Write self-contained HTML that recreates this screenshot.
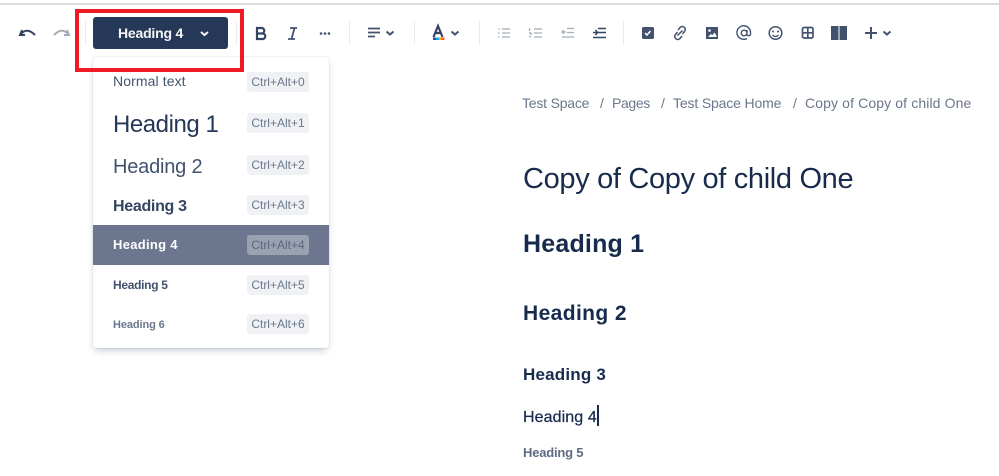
<!DOCTYPE html>
<html><head><meta charset="utf-8"><style>
html,body{margin:0;padding:0;background:#fff}
body{width:999px;height:476px;position:relative;overflow:hidden;font-family:"Liberation Sans",sans-serif}
.t{position:absolute;white-space:nowrap;line-height:1}
.sep{position:absolute;top:21px;width:1px;height:24px;background:#ebecf0}
.k{position:absolute;left:247px;width:62px;height:20px;background:#f0f1f4;border-radius:3px;color:#6b778c;font-size:12px;line-height:20px;text-align:center}
.b{font-size:14px;color:#6b778c;top:96px}
svg{position:absolute;overflow:visible}
</style></head><body>
<div style="position:absolute;left:0;top:3px;width:999px;height:2px;background:#dcdcdc"></div>

<svg style="left:0;top:0" width="999" height="60" fill="none" stroke="#42526e" stroke-width="2">
<path d="M22 30l-2 5 5 0M21 34c4-5 9-4 14 1" stroke="#344563"/>
<path d="M67 30l2 5-5 0M68 34c-4-5-9-4-14 1" stroke="#a5adba"/>
<path d="M257 28h5a2.800 2.800 0 0 1 0 5.500h-5zM257 33.500h6a2.800 2.800 0 0 1 0 5.500h-6z" stroke-width="2.200" stroke="#344563"/>
<path d="M290 28h7M295 39h-7M294.500 28l-3 11" stroke-width="1.800"/>
<circle cx="321" cy="33.500" r="1.300" fill="#42526e" stroke="none"/><circle cx="325" cy="33.500" r="1.300" fill="#42526e" stroke="none"/><circle cx="329" cy="33.500" r="1.300" fill="#42526e" stroke="none"/>
<path d="M368 29h12M368 33h12M368 37h7" stroke-width="1.800" transform="translate(0,-.5)"/>
<path d="M386.500 31.500l3.500 3 3.500-3"/><path d="M451.500 31.500l3.500 3 3.500-3"/>
<path d="M433.500 37l4.500-11 4.500 11M435 33h6" stroke="#344563" stroke-width="2.200"/>
<rect x="433" y="37.500" width="3" height="2.500" fill="#5243aa" stroke="none"/><rect x="436" y="37.500" width="3" height="2.500" fill="#00b8d9" stroke="none"/><rect x="439" y="37.500" width="2.500" height="2.500" fill="#ffab00" stroke="none"/><rect x="441.500" y="37.500" width="3" height="2.500" fill="#ff5630" stroke="none"/>
<g stroke="#a5adba" stroke-width="1.300">
<path d="M502 29h8M502 33h8M502 37h8M498 29h1.500M498 33h1.500M498 37h1.500"/>
<path d="M534 29h8M534 33h8M534 37h8M529.500 28v3M529 33h2v2M529 36.500h2"/>
<path d="M567 28.500h7M567 32.500h7M562 37h12M566 32h-4M564 30l-2 2 2 2"/>
</g>
<path d="M598 28.500h8M598 32.500h8M593 37.500h13M593 32.500h4M595.500 30l2 2.500-2 2.500" stroke="#344563" stroke-width="1.500"/>
<rect x="642" y="27" width="12" height="12" rx="1.500" fill="#42526e" stroke="none"/><path d="M645 33l2 2 3.500-4" stroke="#fff" stroke-width="1.500"/>
<path d="M678 30l2-2.500a3 3 0 0 1 4.500 4l-2 2.500M682 36l-2 2.500a3 3 0 0 1-4.500-4l2-2.500M677.500 35.500l5-5" stroke-width="1.500"/>
<rect x="706" y="27" width="12" height="12" fill="#42526e" stroke="none"/><circle cx="709.500" cy="30.500" r="1.300" fill="#fff" stroke="none"/><path d="M708 37l3-3 1.500 1 2-2.500 2 3v1.500z" fill="#fff" stroke="none"/>
<path d="M750 38.500a6.800 6.800 0 1 1 3.500-5.500v1a1.800 1.800 0 0 1-3.600 0v-4M749.900 33a2.800 2.800 0 1 1-5.600 0 2.800 2.800 0 0 1 5.600 0z" stroke-width="1.400" transform="translate(-3,0)"/>
<circle cx="775.500" cy="33" r="6.300" stroke-width="1.500"/><circle cx="773" cy="31.500" r="1" fill="#42526e" stroke="none"/><circle cx="778" cy="31.500" r="1" fill="#42526e" stroke="none"/><path d="M772.500 35c1.500 2 4.500 2 6 0" stroke-width="1.300"/>
<rect x="802.500" y="27.500" width="10.500" height="10.500" rx="1.500" stroke-width="1.700"/><path d="M807.800 27.500v10.500M802.500 32.800h10.500" stroke-width="1.700"/>
<rect x="831" y="26" width="7.500" height="14" fill="#42526e" stroke="none"/><rect x="839.500" y="26" width="7.500" height="14" fill="#42526e" stroke="none"/>
<path d="M871 27v12M865 33h12" stroke-width="2"/>
<path d="M883.500 31.500l3.500 3 3.500-3"/>
</svg>
<div class="sep" style="left:85px"></div><div class="sep" style="left:236px"></div><div class="sep" style="left:349px"></div><div class="sep" style="left:414px"></div><div class="sep" style="left:479px"></div><div class="sep" style="left:623px"></div>

<div style="position:absolute;left:93px;top:17px;width:135px;height:32px;background:#253858;border-radius:3px"></div>
<div class="t" style="left:118px;top:26px;font-size:14px;font-weight:bold;color:#f4f5f7;letter-spacing:-.2px">Heading 4</div>
<svg style="left:0;top:0" width="999" height="60" fill="none" stroke="#f4f5f7" stroke-width="2"><path d="M201 32l3.500 3 3.500-3"/></svg>

<div style="position:absolute;left:93px;top:57px;width:236px;height:291px;background:#fff;border-radius:3px;box-shadow:0 4px 8px -2px rgba(9,30,66,.25),0 0 1px rgba(9,30,66,.31)"></div>
<div style="position:absolute;left:93px;top:225px;width:236px;height:40px;background:#6c778f"></div>

<div style="position:absolute;left:75px;top:9px;width:161px;height:55px;border:4px solid #ed1c24"></div>

<div class="t" style="left:113px;top:74px;font-size:14px;color:#42526e;letter-spacing:.1px">Normal text</div><div class="k" style="top:72px">Ctrl+Alt+0</div>
<div class="t" style="left:113px;top:113px;font-size:24px;color:#253858;letter-spacing:-.45px">Heading 1</div><div class="k" style="top:113px">Ctrl+Alt+1</div>
<div class="t" style="left:113px;top:157px;font-size:20px;color:#42526e;letter-spacing:-.2px">Heading 2</div><div class="k" style="top:155px">Ctrl+Alt+2</div>
<div class="t" style="left:113px;top:199px;font-size:16px;font-weight:bold;color:#344563;letter-spacing:-.3px">Heading 3</div><div class="k" style="top:195px">Ctrl+Alt+3</div>
<div class="t" style="left:113px;top:238px;font-size:13px;font-weight:bold;color:#fff;letter-spacing:.3px">Heading 4</div><div class="k" style="top:235px;background:#9aa2b2;color:#5c677f">Ctrl+Alt+4</div>
<div class="t" style="left:113px;top:279px;font-size:12px;font-weight:bold;color:#42526e;letter-spacing:-.3px">Heading 5</div><div class="k" style="top:275px">Ctrl+Alt+5</div>
<div class="t" style="left:113px;top:320px;font-size:11px;font-weight:bold;color:#6b778c;letter-spacing:-.1px">Heading 6</div><div class="k" style="top:314px">Ctrl+Alt+6</div>

<div class="t b" style="left:522px;letter-spacing:-.2px">Test Space</div>
<div class="t b" style="left:600px">/</div>
<div class="t b" style="left:612px;letter-spacing:-.35px">Pages</div>
<div class="t b" style="left:661px">/</div>
<div class="t b" style="left:673px;letter-spacing:-.15px">Test Space Home</div>
<div class="t b" style="left:793px">/</div>
<div class="t b" style="left:805px;letter-spacing:.12px">Copy of Copy of child One</div>

<div class="t" style="left:523px;top:165px;font-size:29px;color:#172b4d;letter-spacing:-.33px">Copy of Copy of child One</div>
<div class="t" style="left:523px;top:232px;font-size:25px;font-weight:bold;color:#172b4d;letter-spacing:.2px">Heading 1</div>
<div class="t" style="left:523px;top:303px;font-size:21px;font-weight:bold;color:#172b4d;letter-spacing:.4px">Heading 2</div>
<div class="t" style="left:523px;top:366px;font-size:17px;font-weight:bold;color:#172b4d;letter-spacing:.2px">Heading 3</div>
<div class="t" style="left:523px;top:410px;font-size:16px;color:#172b4d;-webkit-text-stroke:.25px #172b4d;letter-spacing:.1px">Heading 4</div>
<div style="position:absolute;left:597px;top:405px;width:2px;height:21px;background:#172b4d"></div>
<div class="t" style="left:523px;top:446px;font-size:13px;font-weight:bold;color:#5e6c84;letter-spacing:-.2px">Heading 5</div>
</body></html>
